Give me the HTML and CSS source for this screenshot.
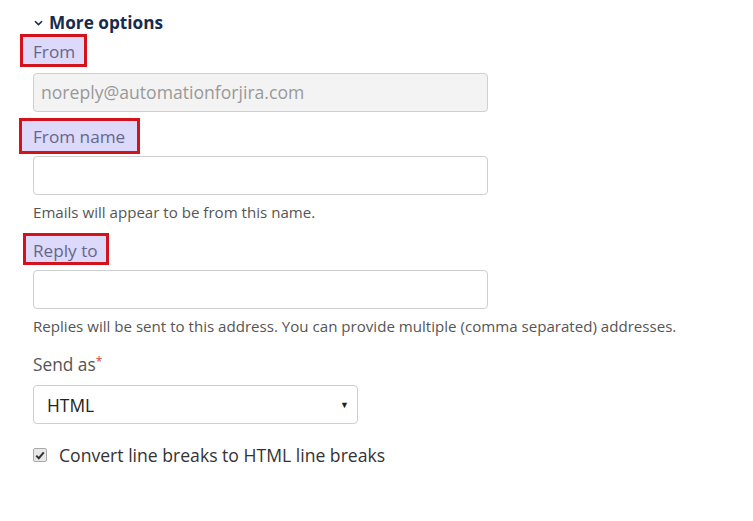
FILE: index.html
```html
<!DOCTYPE html>
<html>
<head>
<meta charset="utf-8">
<link rel="stylesheet" href="styles.css">
</head>
<body>
<div class="panel">
  <div class="toggle">
    <svg class="chev" width="9" height="6" viewBox="0 0 9 6"><path d="M1 1.2 L4.5 4.6 L8 1.2" fill="none" stroke="#172b4d" stroke-width="1.6"/></svg>
    <span>More options</span>
  </div>

  <div class="field f-from">
    <label class="mark m-from">From</label>
    <div class="input disabled">noreply@automationforjira.com</div>
  </div>

  <div class="field f-name">
    <label class="mark m-name">From name</label>
    <div class="input"></div>
    <div class="help">Emails will appear to be from this name.</div>
  </div>

  <div class="field f-reply">
    <label class="mark m-reply">Reply to</label>
    <div class="input"></div>
    <div class="help">Replies will be sent to this address. You can provide multiple (comma separated) addresses.</div>
  </div>

  <div class="field f-send">
    <div class="plain-label">Send as<span class="req">*</span></div>
    <div class="select"><span>HTML</span><span class="arrow">&#9660;</span></div>
  </div>

  <div class="check-row">
    <span class="checkbox"><svg width="10" height="9" viewBox="0 0 10 9"><path d="M1.2 4.6 L3.8 7.2 L8.8 1.4" fill="none" stroke="#333" stroke-width="2"/></svg></span>
    <span>Convert line breaks to HTML line breaks</span>
  </div>
</div>
</body>
</html>
```

FILE: styles.css
```css
* { box-sizing: border-box; }
html, body { margin: 0; padding: 0; background: #fff; }
body {
  font-family: "Open Sans", "Noto Sans", sans-serif;
  color: #333;
}
.panel {
  padding: 10px 0 0 33px;
  width: 753px;
}
.toggle {
  display: flex;
  align-items: center;
  gap: 6px;
  height: 24px;
  font-weight: 700;
  font-size: 17.2px;
  color: #172b4d;
}
.chev { margin-left: 1px; margin-top: 1px; }
.field { display: flex; flex-direction: column; align-items: flex-start; }
.mark {
  display: inline-block;
  border: 3px solid #d4121c;
  background: #dcd9fb;
  color: #66668a;
  font-size: 17.2px;
  line-height: 30px;
  white-space: nowrap;
}
.m-from { margin-left: -13px; padding: 0 9px 0 10px; height: 33px; }
.m-name { margin-left: -14px; padding: 0 12px 0 11px; height: 36px; line-height: 32px; }
.m-reply { margin-left: -10px; padding: 0 8px 0 7px; height: 32px; line-height: 29px; }
.input {
  width: 455px;
  height: 39px;
  border: 1px solid #cfcfcf;
  border-radius: 4px;
  background: #fff;
  font-size: 17.6px;
  line-height: 37px;
  padding: 0 7px;
  color: #999;
  white-space: nowrap;
}
.input.disabled { background: #f3f3f3; }
.f-from .input { margin-top: 6px; }
.f-name { margin-top: 6px; }
.f-name .input { margin-top: 2px; }
.help {
  font-size: 15.1px;
  color: #555;
  margin-top: 8px;
  line-height: 18px;
  white-space: nowrap;
}
.f-reply { margin-top: 12px; }
.f-reply .input { margin-top: 5px; }
.f-send { margin-top: 18px; }
.plain-label {
  font-size: 17.3px;
  color: #555;
  line-height: 24px;
}
.req { color: #d04437; font-size: 12px; vertical-align: top; position: relative; top: -3px; }
.select {
  margin-top: 8px;
  width: 325px;
  height: 39px;
  border: 1px solid #cfcfcf;
  border-radius: 4px;
  display: flex;
  align-items: center;
  justify-content: space-between;
  padding: 0 8px 0 13px;
  font-size: 17.4px;
  color: #222;
}
.arrow { font-size: 9px; color: #222; }
.check-row {
  margin-top: 19px;
  display: flex;
  align-items: center;
  gap: 12px;
  font-size: 17.6px;
  color: #333;
}
.checkbox {
  width: 14px;
  height: 14px;
  border: 1px solid #aaa;
  border-radius: 2px;
  background: #e8e8e8;
  display: flex;
  align-items: center;
  justify-content: center;
}
```
